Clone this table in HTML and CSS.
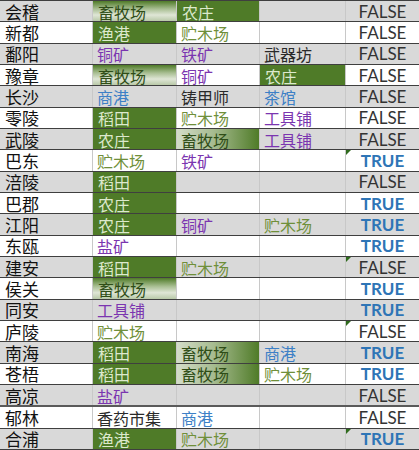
FILE: index.html
```html
<!DOCTYPE html>
<html lang="zh">
<head>
<meta charset="utf-8">
<link rel="stylesheet" href="styles.css">
</head>
<body>
<div class="sheet">
  <div class="row g"><div class="c name">会稽</div><div class="c grad-v t-dg">畜牧场</div><div class="c green">农庄</div><div class="c"></div><div class="c b f">FALSE</div></div>
  <div class="row"><div class="c name">新都</div><div class="c green">渔港</div><div class="c t-ol">贮木场</div><div class="c"></div><div class="c b f">FALSE</div></div>
  <div class="row g"><div class="c name">鄱阳</div><div class="c t-pu">铜矿</div><div class="c t-pu">铁矿</div><div class="c t-bk">武器坊</div><div class="c b f">FALSE</div></div>
  <div class="row"><div class="c name">豫章</div><div class="c grad-v t-dg">畜牧场</div><div class="c t-pu">铜矿</div><div class="c green">农庄</div><div class="c b f">FALSE</div></div>
  <div class="row g"><div class="c name">长沙</div><div class="c t-bl">商港</div><div class="c t-bk">铸甲师</div><div class="c t-bl">茶馆</div><div class="c b f">FALSE</div></div>
  <div class="row"><div class="c name">零陵</div><div class="c green">稻田</div><div class="c t-ol">贮木场</div><div class="c t-pu">工具铺</div><div class="c b f">FALSE</div></div>
  <div class="row g"><div class="c name">武陵</div><div class="c green">农庄</div><div class="c grad-h t-dg">畜牧场</div><div class="c t-pu">工具铺</div><div class="c b f">FALSE</div></div>
  <div class="row"><div class="c name">巴东</div><div class="c t-ol">贮木场</div><div class="c t-pu">铁矿</div><div class="c"></div><div class="c b t flag">TRUE</div></div>
  <div class="row g"><div class="c name">涪陵</div><div class="c green">稻田</div><div class="c"></div><div class="c"></div><div class="c b f">FALSE</div></div>
  <div class="row"><div class="c name">巴郡</div><div class="c green">农庄</div><div class="c"></div><div class="c"></div><div class="c b t">TRUE</div></div>
  <div class="row g"><div class="c name">江阳</div><div class="c green">农庄</div><div class="c t-pu">铜矿</div><div class="c t-ol">贮木场</div><div class="c b t">TRUE</div></div>
  <div class="row"><div class="c name">东瓯</div><div class="c t-pu">盐矿</div><div class="c"></div><div class="c"></div><div class="c b t">TRUE</div></div>
  <div class="row g"><div class="c name">建安</div><div class="c green">稻田</div><div class="c t-ol">贮木场</div><div class="c"></div><div class="c b f flag">FALSE</div></div>
  <div class="row"><div class="c name">侯关</div><div class="c grad-v t-dg">畜牧场</div><div class="c"></div><div class="c"></div><div class="c b t">TRUE</div></div>
  <div class="row g"><div class="c name">同安</div><div class="c t-pu">工具铺</div><div class="c"></div><div class="c"></div><div class="c b t">TRUE</div></div>
  <div class="row"><div class="c name">庐陵</div><div class="c t-ol">贮木场</div><div class="c"></div><div class="c"></div><div class="c b f flag">FALSE</div></div>
  <div class="row g"><div class="c name">南海</div><div class="c green">稻田</div><div class="c grad-h t-dg">畜牧场</div><div class="c t-bl">商港</div><div class="c b t">TRUE</div></div>
  <div class="row"><div class="c name">苍梧</div><div class="c green">稻田</div><div class="c grad-h t-dg">畜牧场</div><div class="c t-ol">贮木场</div><div class="c b t">TRUE</div></div>
  <div class="row g thick"><div class="c name">高凉</div><div class="c t-pu">盐矿</div><div class="c"></div><div class="c"></div><div class="c b f">FALSE</div></div>
  <div class="row"><div class="c name">郁林</div><div class="c t-bk">香药市集</div><div class="c t-bl">商港</div><div class="c"></div><div class="c b f">FALSE</div></div>
  <div class="row g"><div class="c name">合浦</div><div class="c green">渔港</div><div class="c t-ol">贮木场</div><div class="c"></div><div class="c b t flag">TRUE</div></div>
</div>
</body>
</html>
```

FILE: styles.css
```css
html, body {
  margin: 0;
  padding: 0;
  background: #ffffff;
}

.sheet {
  width: 419px;
  height: 450px;
  display: flex;
  flex-direction: column;
  border-top: 1px solid #3f3f3f;
  box-sizing: border-box;
  font-family: "Noto Sans CJK SC", "Noto Sans", sans-serif;
  font-size: 16px;
  color: #1a1a1a;
}

.row {
  flex: 1;
  display: grid;
  grid-template-columns: 92px 84px 83px 86px 1fr;
  border-bottom: 1px solid #3f3f3f;
  background: #ffffff;
  min-height: 0;
}

.row.g {
  background: #d9d9d9;
}

.row.thick {
  border-bottom: 2px solid #5a5a5a;
}

.c {
  display: flex;
  align-items: center;
  padding-left: 4px;
  padding-top: 1px;
  line-height: 18px;
  white-space: nowrap;
  border-left: 1px solid #c8c8c8;
  position: relative;
  min-height: 0;
}

.c.name {
  border-left: none;
  padding-left: 5px;
  color: #111;
  font-size: 17px;
}

.green {
  background: #4f7b28;
  color: #dde9cd;
  padding-left: 5px;
}

.grad-v {
  background: linear-gradient(to bottom, #4f7b28 0%, #a9bf93 40%, #dfe6d6 70%, #b9c9a8 100%);
  padding-left: 5px;
}

.grad-h {
  background: linear-gradient(to right, #d3dcc8 0%, #a6bb8f 45%, #4f7b28 100%);
}

.t-dg { color: #2f4d17; }
.t-ol { color: #6f8f3a; }
.t-pu { color: #7b35b0; }
.t-bl { color: #3d80c6; }
.t-bk { color: #2a2a2a; }

.b {
  justify-content: center;
  padding-left: 0;
  font-family: "Lato", "Liberation Sans", sans-serif;
  font-size: 17px;
}

.f {
  color: #333333;
}

.t {
  color: #2e75b6;
  font-weight: bold;
}

.flag::before {
  content: "";
  position: absolute;
  left: 0;
  top: 0;
  width: 0;
  height: 0;
  border-top: 5px solid #2f6b1d;
  border-right: 5px solid transparent;
}
```
